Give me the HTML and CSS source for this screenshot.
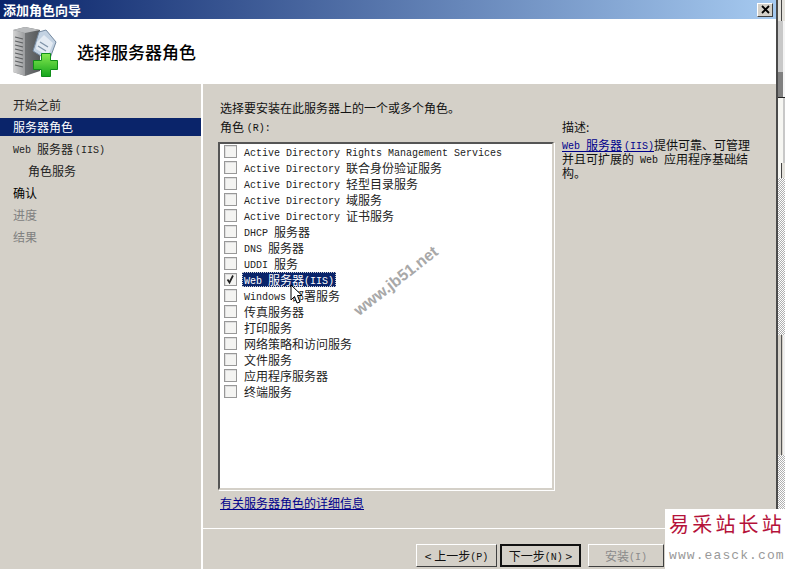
FILE: index.html
```html
<!DOCTYPE html>
<html lang="zh-CN">
<head>
<meta charset="utf-8">
<title>添加角色向导</title>
<link rel="stylesheet" href="styles.css">
</head>
<body>
<div class="screen">
  <div class="window">
    <div class="titlebar">
      <span class="title-text">添加角色向导</span>
      <span class="close" aria-label="关闭"><svg width="9" height="9" viewBox="0 0 9 9"><path d="M1 1L8 8M8 1L1 8" stroke="#000" stroke-width="1.8" fill="none"/></svg></span>
    </div>
    <header class="head">
      <svg class="head-icon" width="45" height="50" viewBox="0 0 45 50">
        <defs>
          <linearGradient id="front" x1="0" x2="1" y1="0" y2="0"><stop offset="0" stop-color="#d4d4d4"/><stop offset="1" stop-color="#9a9c9e"/></linearGradient>
          <linearGradient id="side" x1="0" x2="1" y1="0" y2="0"><stop offset="0" stop-color="#8a8c8e"/><stop offset="1" stop-color="#55585a"/></linearGradient>
          <linearGradient id="plus" x1="0" x2="0" y1="0" y2="1"><stop offset="0" stop-color="#86ea50"/><stop offset="1" stop-color="#14a51c"/></linearGradient>
        </defs>
        <path d="M0 3L12 0L27 3V44L12 49L0 45Z" fill="url(#side)"/>
        <path d="M0 3L12 6V49L0 45Z" fill="url(#front)"/>
        <path d="M0 3L12 0L27 3L12 6Z" fill="#b9bbbd"/>
        <path d="M2 10L10 12M2 14L10 16M2 18L10 20M2 22L10 24M2 26L10 28M2 30L10 32M2 34L10 36M2 38L10 40" stroke="#5c5f61" stroke-width="1.2"/>
        <path d="M26 5L33 3L43 15L36 34L20 24Z" fill="#c3d2e2" stroke="#7489a0"/>
        <path d="M24 15L31 8L40 16L35 29L23 22Z" fill="#e4ebf3"/>
        <path d="M27 15L35 20M25 19L33 24" stroke="#7f93a8" stroke-width="1.4"/>
        <path d="M28.500 26.500H37.500V33.500H44.500V42.500H37.500V49.500H28.500V42.500H20.500V33.500H28.500Z" fill="url(#plus)" stroke="#0f8d18"/>
      </svg>
      <h1 class="head-title">选择服务器角色</h1>
    </header>
    <div class="body">
      <nav class="steps">
        <div class="step">开始之前</div>
        <div class="step step-active">服务器角色</div>
        <div class="step"><span class="lat">Web </span>服务器<span class="lat paren">(IIS)</span></div>
        <div class="step step-sub">角色服务</div>
        <div class="step step-now">确认</div>
        <div class="step step-off">进度</div>
        <div class="step step-off">结果</div>
      </nav>
      <main class="main">
        <div class="content">
          <p class="intro">选择要安装在此服务器上的一个或多个角色。</p>
          <div class="columns">
            <section class="roles">
              <div class="label">角色 <span class="lat">(R):</span></div>
              <div class="listbox">
                <div class="row"><span class="box"></span><span class="row-text"><span class="lat">Active Directory Rights Management Services</span></span></div>
                <div class="row"><span class="box"></span><span class="row-text"><span class="lat">Active Directory </span>联合身份验证服务</span></div>
                <div class="row"><span class="box"></span><span class="row-text"><span class="lat">Active Directory </span>轻型目录服务</span></div>
                <div class="row"><span class="box"></span><span class="row-text"><span class="lat">Active Directory </span>域服务</span></div>
                <div class="row"><span class="box"></span><span class="row-text"><span class="lat">Active Directory </span>证书服务</span></div>
                <div class="row"><span class="box"></span><span class="row-text"><span class="lat">DHCP </span>服务器</span></div>
                <div class="row"><span class="box"></span><span class="row-text"><span class="lat">DNS </span>服务器</span></div>
                <div class="row"><span class="box"></span><span class="row-text"><span class="lat">UDDI </span>服务</span></div>
                <div class="row"><span class="box"><svg width="11" height="11" viewBox="0 0 11 11"><path d="M2.500 5.500L4.500 8.500L8 1.500" stroke="#222" stroke-width="1.7" fill="none"/></svg></span><span class="row-text row-selected"><span class="lat">Web </span>服务器<span class="lat">(IIS)</span></span></div>
                <div class="row"><span class="box"></span><span class="row-text"><span class="lat">Windows </span>部署服务</span></div>
                <div class="row"><span class="box"></span><span class="row-text">传真服务器</span></div>
                <div class="row"><span class="box"></span><span class="row-text">打印服务</span></div>
                <div class="row"><span class="box"></span><span class="row-text">网络策略和访问服务</span></div>
                <div class="row"><span class="box"></span><span class="row-text">文件服务</span></div>
                <div class="row"><span class="box"></span><span class="row-text">应用程序服务器</span></div>
                <div class="row"><span class="box"></span><span class="row-text">终端服务</span></div>
                <svg class="cursor" width="14" height="22" viewBox="0 0 14 22"><path d="M1 1V16L4.500 12.500L7 19L10 18L7.500 11.500H12Z" fill="#fff" stroke="#000"/></svg>
                <span class="watermark">www.jb51.net</span>
              </div>
              <a class="link more">有关服务器角色的详细信息</a>
            </section>
            <aside class="desc">
              <div class="label">描述:</div>
              <p class="desc-text"><a class="link"><span class="lat">Web </span>服务器<span class="lat paren">(IIS)</span></a>提供可靠、可管理并且可扩展的<span class="lat"> Web </span>应用程序基础结构。</p>
            </aside>
          </div>
        </div>
        <footer class="actions">
          <button class="btn">&lt; 上一步<span class="lat">(P)</span></button>
          <button class="btn btn-default">下一步<span class="lat">(N)</span> &gt;</button>
          <button class="btn btn-off">安装<span class="lat">(I)</span></button>
        </footer>
      </main>
    </div>
  </div>
  <div class="scrollstrip">
    <span class="seg seg-top"></span>
    <span class="seg seg-grey"></span>
    <span class="seg seg-thumb"></span>
    <span class="seg seg-pale"></span>
    <span class="seg seg-bracket"></span>
    <span class="seg seg-check seg-check-long"></span>
    <span class="seg seg-line"></span>
    <span class="seg seg-check seg-check-end"></span>
  </div>
  <div class="stamp">
    <div class="stamp-cn">易采站长站</div>
    <div class="stamp-en">www.easck.com</div>
  </div>
</div>
</body>
</html>
```
FILE: styles.css
```css
* { box-sizing: border-box; }
html, body { margin: 0; padding: 0; }
body { width: 785px; height: 569px; overflow: hidden; background: #d4d0c8; }
.screen { position: relative; display: flex; width: 785px; height: 569px; overflow: hidden; font: 12px/16px "Noto Sans CJK SC", sans-serif; color: #111; }
.lat { font-family: "Liberation Mono", monospace; font-size: 10px; line-height: 0; white-space: pre; vertical-align: 1px; }
.paren { margin-left: 2px; }
.window { flex: 0 0 778px; display: flex; flex-direction: column; border-right: 2px solid #4a4a4a; background: #d4d0c8; }
.titlebar { flex: 0 0 19px; display: flex; align-items: center; justify-content: space-between; padding: 0 3px 0 3px; background: linear-gradient(90deg, #0a246a, #a6caf0); }
.title-text { font: bold 13px/16px "Noto Sans CJK SC", sans-serif; color: #fff; }
.close { width: 16px; height: 14px; display: flex; align-items: center; justify-content: center; background: #d4d0c8; border: 1px solid; border-color: #fff #404040 #404040 #fff; }
.head { flex: 0 0 65px; display: flex; align-items: center; gap: 19px; padding: 0 0 0 13px; background: #fff; }
.head-icon { flex: none; }
.head-title { margin: 0; font: 500 17px/20px "Noto Sans CJK SC", sans-serif; color: #000; }
.body { flex: 1; display: flex; min-height: 0; }
.steps { flex: 0 0 203px; padding-top: 10px; border-right: 2px solid #fff; }
.step { height: 22px; padding: 3px 0 0 13px; white-space: nowrap; color: #222; }
.step-active { height: 18px; margin: 2px 0; padding-top: 1px; background: #0a246a; color: #fff; }
.step-sub { padding-left: 28px; }
.step-now { color: #000; }
.step-off { color: #808080; }
.main { flex: 1; display: flex; flex-direction: column; min-width: 0; }
.content { flex: 1; padding: 16px 0 0 17px; border-bottom: 1px solid #fff; }
.intro { margin: 0; }
.columns { display: flex; gap: 8px; }
.roles { flex: 0 0 334px; display: flex; flex-direction: column; }
.label { height: 26px; line-height: 22px; }
.listbox { position: relative; width: 336px; height: 348px; margin-left: -2px; padding-left: 4px; background: #fff; border: 2px solid; border-color: #555 #d4d0c8 #d4d0c8 #555; box-shadow: 1px 1px 0 #fff; }
.row { display: flex; align-items: center; height: 16px; gap: 5px; }
.box { flex: none; width: 13px; height: 13px; margin-top: -1px; display: flex; align-items: center; justify-content: center; background: #f4f4f2; border: 1px solid #989898; box-shadow: inset 1px 1px 0 #dedede; }
.row-text { margin-bottom: 2px; padding: 0 2px; line-height: 15px; color: #222; white-space: nowrap; }
.row-selected { background: #0a246a; color: #fff; outline: 1px dotted #ccc; outline-offset: -1px; }
.cursor { position: absolute; left: 70px; top: 140px; }
.watermark { position: absolute; left: 176px; top: 137px; transform: translate(-50%, -50%) rotate(-38deg); font: bold 16px/16px "Liberation Sans", sans-serif; color: #a8a8a8; white-space: nowrap; }
.link { color: #00008b; text-decoration: underline; }
.more { margin-top: 5px; }
.desc { flex: 0 0 192px; }
.desc-text { margin: -4px 0 0; line-height: 14px; }
.actions { flex: 0 0 40px; display: flex; align-items: flex-start; gap: 3px; padding: 15px 0 0 213px; }
.btn { flex: none; width: 81px; height: 23px; padding: 0; background: #d4d0c8; border: 1px solid; border-color: #fff #404040 #404040 #fff; font: 12px/16px "Noto Sans CJK SC", sans-serif; color: #111; }
.btn-default { border: 2px solid #111; }
.btn-off { width: 76px; margin-left: 4px; color: #8a8a8a; }
.scrollstrip { flex: 1; display: flex; flex-direction: column; background: #d4d0c8; }
.seg { display: block; flex: none; }
.seg-top { height: 21px; background: linear-gradient(90deg, #e4e2dc 0 3px, #444 3px 4px, #e4e2dc 4px); }
.seg-grey { height: 51px; background: linear-gradient(90deg, #c8c8c8 0 5px, #f4f4f4 5px); }
.seg-thumb { height: 26px; background: linear-gradient(90deg, #808080 0 5px, #f4f4f4 5px); border-bottom: 1px solid #222; }
.seg-pale { height: 65px; background: linear-gradient(90deg, #f6f6f2 0 5px, #c8c8c8 5px); }
.seg-bracket { height: 15px; background: linear-gradient(90deg, #f6f6f2 0 3px, #444 3px 4px, #e4e2dc 4px); }
.seg-check { background: repeating-conic-gradient(#b0b0b0 0 25%, #fff 0 50%) 0 0 / 2px 2px; }
.seg-check-long { height: 157px; }
.seg-line { height: 120px; background: linear-gradient(90deg, #d4d0c8 0 3px, #555 3px 4px, #d4d0c8 4px 5px, #f0f0f0 5px); }
.seg-check-end { flex: 1; }
.stamp { position: absolute; left: 665px; top: 509px; width: 120px; height: 60px; padding: 2px 0 0 4px; background: #fff; }
.stamp-cn { font: 400 20px/26px "Noto Sans CJK SC", sans-serif; color: #b5123a; letter-spacing: 3.200px; white-space: nowrap; }
.stamp-en { margin-top: 11px; font: 13px/16px "Liberation Mono", monospace; color: #999; letter-spacing: 1.100px; white-space: nowrap; }
```
